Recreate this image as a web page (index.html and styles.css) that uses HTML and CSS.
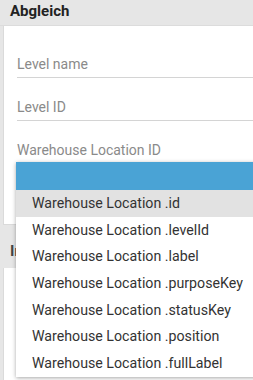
FILE: index.html
```html
<!DOCTYPE html>
<html lang="de">
<head>
  <meta charset="UTF-8">
  <title>Abgleich</title>
  <link rel="stylesheet" href="styles.css">
</head>
<body>

  <h2 class="section-title">Abgleich</h2>
  <div class="card">
    <div class="field"><span class="label">Level name</span></div>
    <div class="field"><span class="label">Level ID</span></div>
    <div class="field field-open">
      <span class="label">Warehouse Location ID</span>
      <div class="dropdown">
        <div class="dropdown-selected"></div>
        <ul class="options">
          <li class="active">Warehouse Location .id</li>
          <li>Warehouse Location .levelId</li>
          <li>Warehouse Location .label</li>
          <li>Warehouse Location .purposeKey</li>
          <li>Warehouse Location .statusKey</li>
          <li>Warehouse Location .position</li>
          <li>Warehouse Location .fullLabel</li>
        </ul>
      </div>
    </div>
  </div>

  <h2 class="section-title second">Info</h2>
  <div class="card card-short"></div>

</body>
</html>
```

FILE: styles.css
```css
html, body {
  overflow: hidden;
}
body {
  margin: 0;
  width: 253px;
  height: 380px;
  font-family: Roboto, "Liberation Sans", sans-serif;
  background-color: #e6e6e6;
}
.section-title {
  margin: 0;
  padding: 0 10px;
  height: 25px;
  line-height: 22px;
  font-size: 15px;
  font-weight: bold;
  color: #222;
  border-bottom: 1px solid #dcdcdc;
}
.section-title.second {
  height: auto;
  margin-top: 16px;
  line-height: 20px;
  padding-bottom: 7px;
  border-bottom: none;
  color: #444;
}
.card {
  box-sizing: border-box;
  margin-left: 3px;
  width: 320px;
  height: 199px;
  padding: 28px 13px 0;
  background: #fff;
  border: 1px solid #dadada;
  border-top: none;
}
.card-short {
  height: 200px;
}
.field {
  position: relative;
  margin-top: 19px;
  padding-bottom: 3px;
  border-bottom: 1px solid #d4d4d4;
}
.field:first-child {
  margin-top: 0;
}
.field-open {
  border-bottom: none;
}
.label {
  display: block;
  line-height: 20px;
  font-size: 14px;
  color: #8a8a8a;
}
.dropdown {
  position: absolute;
  z-index: 5;
  top: 22px;
  left: -1px;
  width: 260px;
  background: #fff;
  box-shadow: 0 1px 4px rgba(0, 0, 0, 0.35);
}
.dropdown-selected {
  height: 28px;
  background: #4aa3d5;
}
.options {
  list-style: none;
  margin: 0;
  padding: 0;
}
.options li {
  height: 26.7px;
  line-height: 26.7px;
  padding-left: 16px;
  font-size: 14.2px;
  color: #333;
  white-space: nowrap;
}
.options li.active {
  background: #e2e2e2;
}
```
